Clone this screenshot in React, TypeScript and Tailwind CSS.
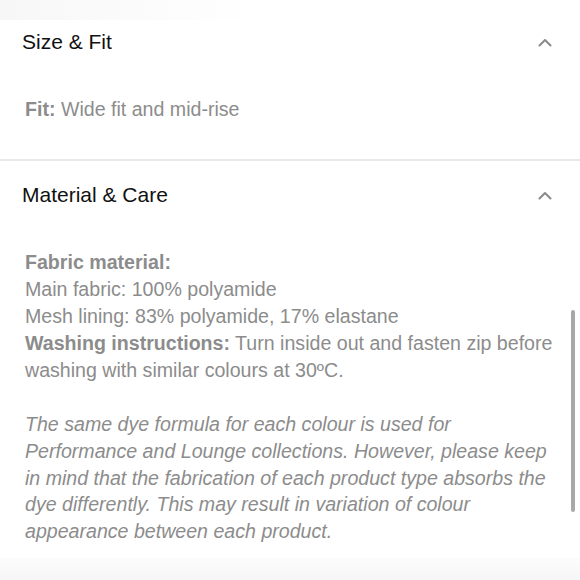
import React from "react";

function Chevron() {
  return (
    <svg width="14" height="9" viewBox="0 0 14 9" fill="none" className="shrink-0">
      <path d="M1.5 7.5 L7 2 L12.5 7.5" stroke="#8a8a8a" strokeWidth="2" strokeLinecap="round" strokeLinejoin="round" />
    </svg>
  );
}

export default function App() {
  return (
    <div
      className="relative w-[580px] h-[580px] overflow-hidden bg-white"
      style={{ fontFamily: '"Liberation Sans", Arial, sans-serif' }}
    >
      <div className="absolute left-0 top-0 w-[260px] h-[20px] bg-gradient-to-r from-[#f7f7f7] to-white" />
      <div className="absolute left-0 bottom-0 w-full h-[22px] bg-gradient-to-b from-[#fcfcfc] to-[#f6f6f6]" />

      <section className="relative pb-[36px]">
        <div className="flex items-center justify-between pl-[22px] pr-[28px] pt-[28px] h-[56px]">
          <h2 className="text-[21px] leading-[28px] text-[#111]">Size &amp; Fit</h2>
          <Chevron />
        </div>
        <p className="mt-[40px] pl-[25px] text-[19.6px] leading-[27px] text-[#8c8c8c]">
          <span className="font-bold">Fit:</span> Wide fit and mid-rise
        </p>
      </section>

      <div className="h-[2px] bg-[#e8e8e8]" />

      <section className="relative">
        <div className="flex items-center justify-between pl-[22px] pr-[28px] pt-[20px] h-[48px]">
          <h2 className="text-[21px] leading-[28px] text-[#111]">Material &amp; Care</h2>
          <Chevron />
        </div>
        <div className="mt-[40px] pl-[25px] pr-[20px] text-[19.6px] leading-[27px] text-[#8c8c8c]">
          <p className="font-bold">Fabric material:</p>
          <p>Main fabric: 100% polyamide</p>
          <p>Mesh lining: 83% polyamide, 17% elastane</p>
          <p>
            <span className="font-bold">Washing instructions:</span> Turn inside out and fasten zip before washing with similar colours at 30ºC.
          </p>
          <p className="mt-[27px] italic leading-[26.75px]">
            The same dye formula for each colour is used for Performance and Lounge collections. However, please keep in mind that the fabrication of each product type absorbs the dye differently. This may result in variation of colour appearance between each product.
          </p>
        </div>
      </section>

      <div className="absolute left-[571px] top-[310px] w-[4px] h-[202px] rounded-full bg-[#a8a8a8]" />
    </div>
  );
}
